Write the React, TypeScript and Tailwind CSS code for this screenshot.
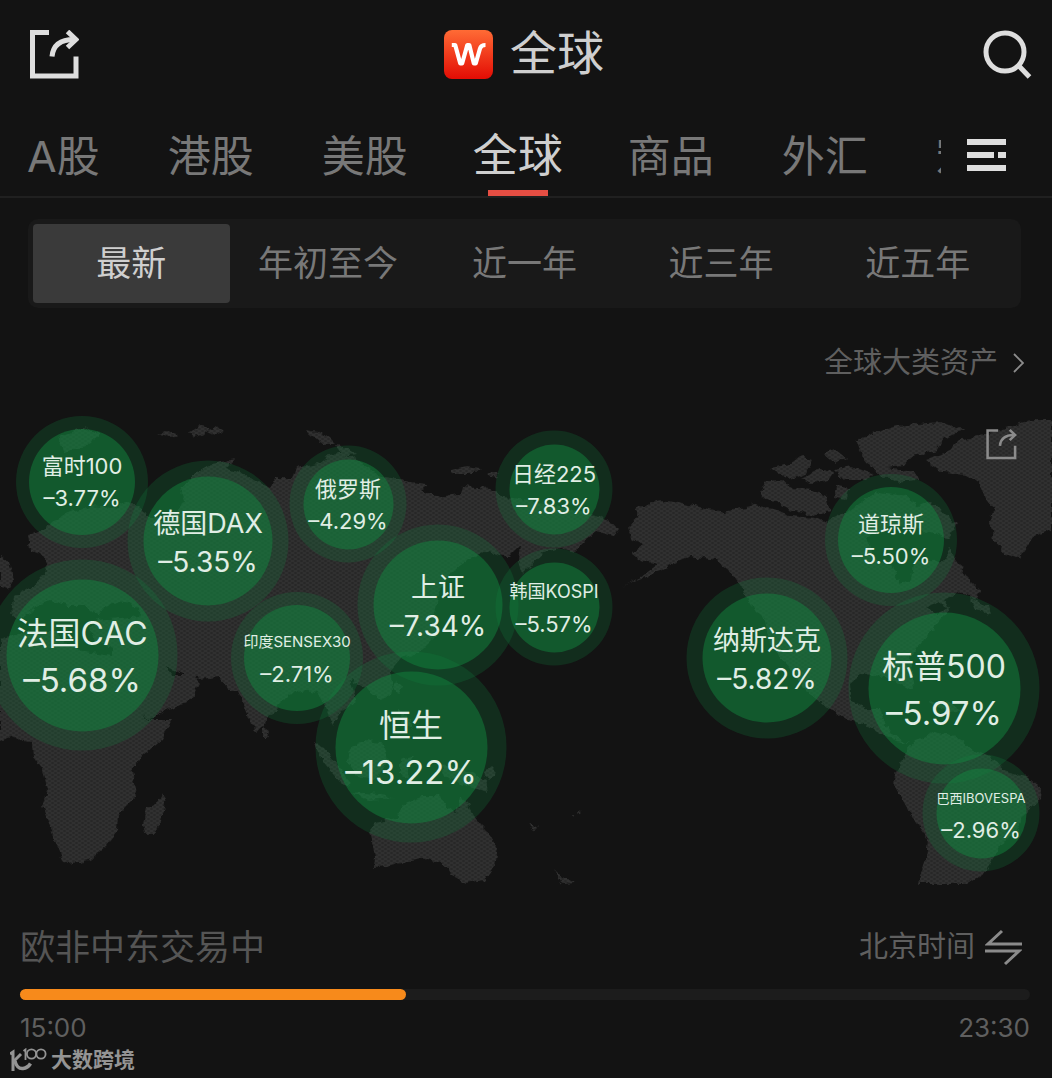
import { useState } from "react";

type Size = "sm" | "md" | "lg";

interface Bubble {
  name: string;
  change: string;
  x: number;
  y: number;
  outer: string;
  inner: string;
  size: Size;
  nameClass: string;
}

const MAP_W = 1052;
const MAP_H = 480;
const MAP_TOP = 410;

const XS = { outer: "size-[117px]", inner: "size-[90px]" };
const S = { outer: "size-[132px]", inner: "size-[106px]" };
const M = { outer: "size-[161px]", inner: "size-[129px]" };
const L = { outer: "size-[191px]", inner: "size-[152px]" };

const BUBBLES: Bubble[] = [
  { name: "富时100", change: "–3.77%", x: 82, y: 482, ...S, size: "sm", nameClass: "text-[22px]" },
  { name: "德国DAX", change: "–5.35%", x: 208, y: 541, ...M, size: "md", nameClass: "text-[27px]" },
  { name: "法国CAC", change: "–5.68%", x: 82, y: 655, ...L, size: "lg", nameClass: "text-[32px]" },
  { name: "俄罗斯", change: "–4.29%", x: 348, y: 504, ...XS, size: "sm", nameClass: "text-[22px]" },
  { name: "日经225", change: "–7.83%", x: 554, y: 489, ...XS, size: "sm", nameClass: "text-[22px]" },
  { name: "上证", change: "–7.34%", x: 438, y: 605, ...M, size: "md", nameClass: "text-[27px]" },
  { name: "韩国KOSPI", change: "–5.57%", x: 554, y: 607, ...XS, size: "sm", nameClass: "text-[18px]" },
  { name: "印度SENSEX30", change: "–2.71%", x: 297, y: 658, ...S, size: "sm", nameClass: "text-[15px]" },
  { name: "恒生", change: "–13.22%", x: 411, y: 747, ...L, size: "lg", nameClass: "text-[32px]" },
  { name: "道琼斯", change: "–5.50%", x: 891, y: 540, ...S, size: "sm", nameClass: "text-[22px]" },
  { name: "纳斯达克", change: "–5.82%", x: 767, y: 658, ...M, size: "md", nameClass: "text-[27px]" },
  { name: "标普500", change: "–5.97%", x: 944, y: 688, ...L, size: "lg", nameClass: "text-[32px]" },
  { name: "巴西IBOVESPA", change: "–2.96%", x: 981, y: 813, ...XS, size: "sm", nameClass: "text-[13px]" },
];

const LINE: Record<Size, string> = {
  sm: "leading-[32px]",
  md: "leading-[39px]",
  lg: "leading-[46px]",
};

const CHANGE: Record<Size, string> = {
  sm: "text-[22px]",
  md: "text-[28px]",
  lg: "text-[33px]",
};

const PAD: Record<Size, string> = { sm: "pt-0", md: "pt-[2px]", lg: "pt-[2px]" };

const LAND = [
  // Europe and Asia
  "M0 556 L8 562 L14 580 L8 590 L0 588 Z",
  "M28 535 L45 530 L52 522 L70 512 L92 506 L112 508 L128 502 L142 508 L146 516 L156 516 L164 522 L178 512 L184 500 L180 490 L190 477 L212 464 L234 459 L226 468 L252 478 L270 488 L276 478 L292 478 L296 468 L318 464 L330 454 L346 452 L362 464 L382 476 L410 482 L428 484 L420 490 L436 497 L460 494 L462 486 L490 488 L504 497 L530 500 L556 506 L580 512 L600 516 L620 528 L614 536 L596 532 L586 540 L574 552 L560 548 L545 552 L530 566 L522 574 L518 560 L520 546 L508 558 L488 551 L468 560 L452 572 L440 592 L434 612 L436 636 L420 652 L402 658 L390 672 L394 690 L380 700 L366 690 L350 680 L356 702 L340 712 L332 726 L326 708 L318 694 L306 690 L290 694 L276 708 L266 722 L258 732 L252 726 L244 704 L238 690 L230 690 L218 677 L200 679 L186 676 L166 666 L172 676 L192 676 L200 684 L192 698 L164 712 L150 720 L136 706 L120 680 L112 660 L112 648 L96 640 L88 628 L96 620 L120 618 L142 616 L132 604 L116 602 L104 608 L98 616 L86 606 L68 606 L50 600 L36 606 L22 620 L12 616 L14 596 L36 584 L48 570 L44 556 L30 550 Z",
  // Africa
  "M0 640 L24 632 L58 632 L64 642 L84 652 L112 656 L122 680 L138 706 L148 720 L171 720 L162 740 L142 756 L132 770 L136 796 L118 814 L117 832 L106 846 L90 860 L68 864 L62 860 L52 832 L42 806 L47 790 L42 770 L33 758 L32 742 L22 741 L14 736 L0 741 Z",
  "M162 793 L166 800 L160 822 L154 834 L145 834 L143 824 L147 808 L157 804 Z",
  // Arctic islands of the old world
  "M158 433 l10 -2 l10 4 l-8 2 z M190 432 l10 -6 l10 2 l-6 6 l-10 3 z M206 431 l10 -4 l8 4 l-10 4 z M305 430 l14 2 l10 6 l6 6 l-12 0 l-12 -8 z M335 446 l14 2 l8 6 l-14 2 z M452 470 l14 -3 l14 2 l-8 6 l-18 0 z M486 472 l14 2 l-4 4 l-8 -2 z M60 436 l24 -8 l16 6 l-14 12 l-22 6 z",
  // Islands of Asia and Oceania
  "M263 727 l6 4 l-2 8 l-4 0 z M314 742 l10 6 l18 22 l8 16 l-10 -4 l-16 -18 z M350 748 l16 -8 l18 4 l4 16 l-12 20 l-18 -4 l-10 -14 z M396 680 l6 6 l-4 10 l-4 -8 z M398 708 l10 8 l4 14 l-10 -8 z M350 792 l28 2 l16 4 l-26 2 z M400 760 l14 -4 l-6 10 l2 14 l-10 -6 z M440 764 l20 4 l26 12 l2 12 l-22 -6 l-22 -10 z M484 772 l8 -6 l6 6 l-10 8 z M530 824 l8 4 l-2 2 l-7 -4 z M572 815 l4 0 l-2 3 z M577 811 l3 1 l-3 2 z M554 869 l8 8 l14 6 l-14 1 z",
  // Australia
  "M370 830 L376 823 L396 818 L406 804 L422 796 L440 796 L446 808 L456 814 L460 798 L467 802 L476 820 L488 832 L497 848 L494 866 L484 880 L466 883 L453 876 L446 866 L428 858 L404 862 L388 867 L374 868 L375 856 Z",
  // North America
  "M628 527 L638 516 L636 510 L650 502 L662 500 L700 507 L724 512 L755 505 L776 510 L790 516 L816 518 L826 522 L850 510 L866 498 L880 492 L906 496 L920 506 L932 500 L946 516 L958 524 L948 540 L954 558 L968 578 L980 590 L976 600 L958 592 L944 600 L950 608 L936 624 L924 640 L910 656 L914 690 L900 684 L884 676 L862 674 L850 684 L852 702 L866 708 L880 708 L884 722 L892 734 L908 744 L896 742 L872 728 L846 719 L828 708 L806 690 L790 668 L770 644 L764 618 L752 606 L744 592 L733 574 L716 560 L690 556 L680 560 L664 568 L648 576 L622 586 L640 578 L658 564 L640 560 L632 554 L644 544 L632 540 Z",
  "M970 598 L988 606 L990 614 L974 610 Z",
  // Arctic Canada
  "M759 492 L766 482 L782 479 L792 488 L812 490 L826 496 L830 512 L812 516 L792 510 L776 502 L766 500 Z",
  "M770 468 L790 464 L800 456 L812 460 L806 472 L790 480 Z M800 478 L820 468 L834 472 L828 480 L812 484 Z M824 454 L836 450 L846 458 L836 464 Z M834 470 L852 466 L872 474 L866 480 L844 480 Z M836 486 l14 2 l-4 12 l-12 -2 z",
  "M856 440 L872 434 L896 426 L940 422 L966 430 L944 438 L938 450 L912 456 L904 466 L888 468 L914 472 L918 480 L896 482 L876 472 L862 456 Z",
  // Greenland
  "M926 460 L950 450 L960 440 L1000 430 L1030 420 L1052 420 L1052 530 L1034 536 L1020 558 L1006 554 L994 540 L990 522 L994 508 L984 496 L980 484 L966 474 L942 472 Z",
  // South America
  "M905 752 L916 740 L934 732 L956 736 L974 750 L996 760 L1004 770 L1028 778 L1041 788 L1040 800 L1024 814 L1016 832 L1000 844 L992 862 L984 874 L974 880 L968 884 L918 884 L926 860 L928 838 L916 822 L906 806 L894 784 L897 770 Z",
  "M930 700 L948 704 L962 710 L950 712 L936 706 Z",
].join(" ");

const WATER =
  "M868 536 L884 528 L906 526 L930 532 L952 540 L946 560 L914 562 L912 580 L900 584 L892 566 L874 560 Z M926 608 l12 -6 l10 6 l-12 6 z";

function ShareIcon({ className, stroke = 5 }: { className: string; stroke?: number }) {
  return (
    <svg viewBox="0 0 49 49" className={className} fill="none" stroke="currentColor" strokeWidth={stroke} aria-hidden="true">
      <path d="M19 2.5H2.5v43.5h43.5V26.5" />
      <path d="M22 26.5C23 16 30 9.500 44 9.500" />
      <path d="M37.5 1.5L46 9.500L37.5 17.5" />
    </svg>
  );
}

function WorldMap() {
  return (
    <svg
      viewBox={`0 ${MAP_TOP} ${MAP_W} ${MAP_H}`}
      className="absolute inset-0 size-full"
      aria-hidden="true"
    >
      <defs>
        <pattern id="dots" width="6" height="4" patternUnits="userSpaceOnUse">
          <rect width="6" height="4" fill="#303030" />
          <ellipse cx="1.5" cy="1" rx="1.500" ry="0.800" fill="#222222" />
          <ellipse cx="4.5" cy="3" rx="1.500" ry="0.800" fill="#222222" />
        </pattern>
        <filter id="rough" filterUnits="userSpaceOnUse" x="0" y={MAP_TOP} width={MAP_W} height={MAP_H}>
          <feTurbulence type="fractalNoise" baseFrequency="0.14" numOctaves="2" seed="4" result="n" />
          <feDisplacementMap in="SourceGraphic" in2="n" scale="7" xChannelSelector="R" yChannelSelector="G" />
        </filter>
        <mask id="land" maskUnits="userSpaceOnUse" x="0" y={MAP_TOP} width={MAP_W} height={MAP_H}>
          <g filter="url(#rough)">
            <rect x="0" y={MAP_TOP} width={MAP_W} height={MAP_H} fill="#000" />
            <path d={LAND} fill="#fff" />
            <path d={WATER} fill="#000" />
          </g>
        </mask>
      </defs>
      <rect x="0" y={MAP_TOP} width={MAP_W} height={MAP_H} fill="url(#dots)" mask="url(#land)" />
    </svg>
  );
}

const MARKETS = ["A股", "港股", "美股", "全球", "商品", "外汇", "宏观"];
const PERIODS = ["最新", "年初至今", "近一年", "近三年", "近五年"];

export default function App() {
  const [market, setMarket] = useState("全球");
  const [period, setPeriod] = useState("最新");
  const progress = 38.2;

  return (
    <div className="min-h-screen w-full overflow-hidden bg-[#131313] font-['Inter','Noto_Sans_CJK_SC',sans-serif] text-[#cfcfcf]">
      <header className="flex h-[108px] items-center justify-between pt-px pr-5 pl-[30px]">
        <button type="button" aria-label="分享" className="text-[#dedede]">
          <ShareIcon className="size-[49px]" />
        </button>
        <h1 className="mr-[14px] flex items-center gap-[17px] text-[47px] leading-[56px]">
          <svg viewBox="0 0 49 49" className="size-[49px]" aria-hidden="true">
            <defs>
              <linearGradient id="logo" x1="0" y1="0" x2="0" y2="1">
                <stop offset="0" stopColor="#ff6b35" />
                <stop offset="1" stopColor="#e30c04" />
              </linearGradient>
            </defs>
            <rect width="49" height="49" rx="8" fill="url(#logo)" />
            <path
              d="M7.800 15H11.200L16.200 33.300H18.200L23.300 15H25.300L29.800 33.300H31.800L36 18.500Q37 15 41.500 15"
              fill="none"
              stroke="#fff"
              strokeWidth="4.200"
              strokeLinejoin="round"
            />
          </svg>
          <span className="pb-1">全球</span>
        </h1>
        <button type="button" aria-label="搜索" className="text-[#dedede]">
          <svg viewBox="0 0 49 49" className="size-[49px]" fill="none" stroke="currentColor" strokeWidth="5" aria-hidden="true">
            <circle cx="22" cy="22" r="19" />
            <path d="M35 35L46.5 47" />
          </svg>
        </button>
      </header>

      <nav className="flex h-[90px] items-stretch border-b-2 border-[#202020]">
        <div className="flex min-w-0 flex-1 gap-[68px] overflow-hidden pl-[27px]">
          {MARKETS.map((m) =>
            m === market ? (
              <button
                key={m}
                type="button"
                className="relative -mx-[3px] shrink-0 pt-2 text-[45px] whitespace-nowrap text-[#cfcfcf]"
              >
                {m}
                <span className="absolute bottom-0 left-1/2 h-[6px] w-[60px] -translate-x-1/2 bg-[#e64e43]" />
              </button>
            ) : (
              <button
                key={m}
                type="button"
                onClick={() => setMarket(m)}
                className="shrink-0 pt-2 text-[43px] whitespace-nowrap text-[#787878]"
              >
                {m}
              </button>
            ),
          )}
        </div>
        <button type="button" aria-label="更多市场" className="flex w-[111px] shrink-0 items-center pt-[6px] pl-[26px] text-[#dedede]">
          <svg viewBox="0 0 39 33" className="h-[33px] w-[39px]" fill="currentColor" aria-hidden="true">
            <path d="M0 0h39v6H0zM0 13h27v6H0zM31 13h8v6h-8zM0 26h39v6H0z" />
          </svg>
        </button>
      </nav>

      <main>
        <div className="mt-[21px] mr-[31px] ml-7 grid grid-cols-5 rounded-[10px] bg-[#191919] p-[5px]">
          {PERIODS.map((p) => (
            <button
              key={p}
              type="button"
              onClick={() => setPeriod(p)}
              className={
                p === period
                  ? "h-[79px] rounded bg-[#3a3a3a] text-[35px] text-[#cfcfcf]"
                  : "h-[79px] rounded text-[35px] text-[#787878]"
              }
            >
              {p}
            </button>
          ))}
        </div>

        <div className="flex h-[102px] justify-end pt-8 pr-7">
          <a href="#assets" className="flex h-[46px] items-center gap-[15px] text-[29px] text-[#5f5f5f]">
            全球大类资产
            <svg viewBox="0 0 11 20" className="h-5 w-[11px] text-[#8c8c8c]" fill="none" stroke="currentColor" strokeWidth="1.800" aria-hidden="true">
              <path d="M1 1L10 10L1 19" />
            </svg>
          </a>
        </div>

        <section className="relative aspect-[1052/480] w-full overflow-hidden">
          <WorldMap />
          {BUBBLES.map((b) => (
            <button
              key={b.name}
              type="button"
              className={`absolute flex -translate-x-1/2 -translate-y-1/2 items-center justify-center rounded-full bg-[#1386403b] ${b.outer}`}
              style={{
                left: `${(b.x / MAP_W) * 100}%`,
                top: `${((b.y - MAP_TOP) / MAP_H) * 100}%`,
              }}
            >
              <span
                className={`flex shrink-0 flex-col items-center justify-center rounded-full bg-[#1386407d] whitespace-nowrap text-[#e0eee5] ${b.inner} ${PAD[b.size]}`}
              >
                <span className={`${b.nameClass} ${LINE[b.size]}`}>{b.name}</span>
                <span className={`${CHANGE[b.size]} ${LINE[b.size]}`}>{b.change}</span>
              </span>
            </button>
          ))}
          <button type="button" aria-label="分享地图" className="absolute top-[19px] right-[35px] text-[#8b8b8b]">
            <ShareIcon className="size-[31px]" stroke={4} />
          </button>
        </section>

        <section className="pt-[29px] pr-[22px] pl-5">
          <div className="flex h-[56px] items-center justify-between">
            <h2 className="text-[35px] text-[#555555]">欧非中东交易中</h2>
            <button type="button" className="flex items-center gap-[10px] pr-2 text-[29px] text-[#5f5f5f]">
              北京时间
              <svg viewBox="0 0 37 37" className="size-[37px] text-[#8b8b8b]" fill="none" stroke="currentColor" strokeWidth="3" aria-hidden="true">
                <path d="M17 2L3 15H37" />
                <path d="M20 35L34 22H0" />
              </svg>
            </button>
          </div>
          <div
            role="progressbar"
            aria-label="交易进度"
            aria-valuenow={progress}
            className="mt-[14px] h-[11px] w-full rounded-full bg-[#1c1c1c]"
          >
            <div className="h-full rounded-full bg-[#f78a1b]" style={{ width: `${progress}%` }} />
          </div>
          <div className="mt-2.5 flex justify-between text-[26px] leading-9 text-[#5f5f5f]">
            <time>15:00</time>
            <time>23:30</time>
          </div>
        </section>

        <footer className="flex h-7 items-center gap-1 pl-[10px] text-[21px] leading-7 font-bold text-[#949494]">
          <svg viewBox="0 0 37 24" className="h-6 w-[37px]" fill="none" stroke="currentColor" aria-hidden="true">
            <path d="M0 6L3 4V23" strokeWidth="3" />
            <path d="M11 6L4 13" strokeWidth="3" />
            <path d="M5 13C6 18 9 21 13 20.500C17 20 19 18 20.500 15.500" strokeWidth="3.500" />
            <path d="M13.500 3L15.500 1.500V12" strokeWidth="1.800" />
            <circle cx="21.500" cy="6" r="4.600" strokeWidth="1.800" />
            <circle cx="31" cy="6" r="4.600" strokeWidth="1.800" />
          </svg>
          大数跨境
        </footer>
      </main>
    </div>
  );
}
